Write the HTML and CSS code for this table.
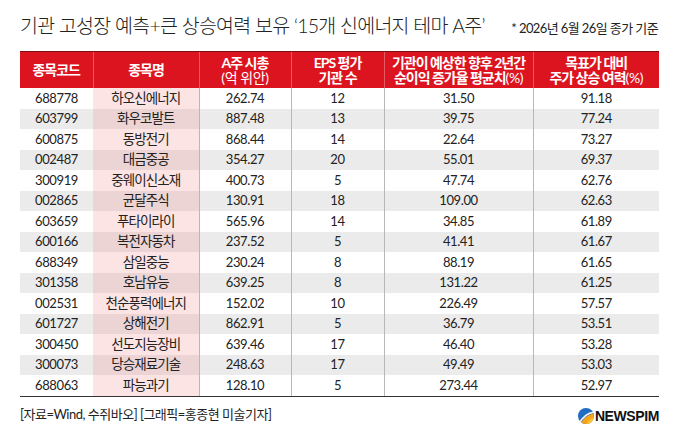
FILE: index.html
```html
<!DOCTYPE html>
<html lang="ko">
<head>
<meta charset="utf-8">
<link rel="stylesheet" href="styles.css">
</head>
<body>
<div class="page">
  <div class="top">
    <h1 class="title">기관 고성장 예측+큰 상승여력 보유 ‘15개 신에너지 테마 A주’</h1>
    <div class="note">* 2026년 6월 26일 종가 기준</div>
  </div>
  <table class="tbl">
    <colgroup>
      <col class="c1"><col class="c2"><col class="c3"><col class="c4"><col class="c5"><col class="c6">
    </colgroup>
    <thead>
      <tr>
        <th>종목코드</th>
        <th>종목명</th>
        <th>A주 시총<br><span class="lt">(억 위안)</span></th>
        <th>EPS 평가<br>기관 수</th>
        <th>기관이 예상한 향후 2년간<br>순이익 증가율 평균치<span class="lt">(%)</span></th>
        <th>목표가 대비<br>주가 상승 여력<span class="lt">(%)</span></th>
      </tr>
    </thead>
    <tbody>
      <tr><td>688778</td><td class="nm">하오신에너지</td><td>262.74</td><td>12</td><td>31.50</td><td>91.18</td></tr>
      <tr><td>603799</td><td class="nm">화우코발트</td><td>887.48</td><td>13</td><td>39.75</td><td>77.24</td></tr>
      <tr><td>600875</td><td class="nm">동방전기</td><td>868.44</td><td>14</td><td>22.64</td><td>73.27</td></tr>
      <tr><td>002487</td><td class="nm">대금중공</td><td>354.27</td><td>20</td><td>55.01</td><td>69.37</td></tr>
      <tr><td>300919</td><td class="nm">중웨이신소재</td><td>400.73</td><td>5</td><td>47.74</td><td>62.76</td></tr>
      <tr><td>002865</td><td class="nm">균달주식</td><td>130.91</td><td>18</td><td>109.00</td><td>62.63</td></tr>
      <tr><td>603659</td><td class="nm">푸타이라이</td><td>565.96</td><td>14</td><td>34.85</td><td>61.89</td></tr>
      <tr><td>600166</td><td class="nm">복전자동차</td><td>237.52</td><td>5</td><td>41.41</td><td>61.67</td></tr>
      <tr><td>688349</td><td class="nm">삼일중능</td><td>230.24</td><td>8</td><td>88.19</td><td>61.65</td></tr>
      <tr><td>301358</td><td class="nm">호남유능</td><td>639.25</td><td>8</td><td>131.22</td><td>61.25</td></tr>
      <tr><td>002531</td><td class="nm">천순풍력에너지</td><td>152.02</td><td>10</td><td>226.49</td><td>57.57</td></tr>
      <tr><td>601727</td><td class="nm">상해전기</td><td>862.91</td><td>5</td><td>36.79</td><td>53.51</td></tr>
      <tr><td>300450</td><td class="nm">선도지능장비</td><td>639.46</td><td>17</td><td>46.40</td><td>53.28</td></tr>
      <tr><td>300073</td><td class="nm">당승재료기술</td><td>248.63</td><td>17</td><td>49.49</td><td>53.03</td></tr>
      <tr><td>688063</td><td class="nm">파능과기</td><td>128.10</td><td>5</td><td>273.44</td><td>52.97</td></tr>
    </tbody>
  </table>
  <div class="foot">
    <div class="src">[자료=Wind, 수쥐바오] [그래픽=홍종현 미술기자]</div>
    <div class="logo">
      <svg class="logo-mark" width="16" height="16" viewBox="0 0 16 16">
        <defs><clipPath id="lc"><circle cx="8" cy="8" r="8"/></clipPath></defs>
        <g clip-path="url(#lc)">
          <rect width="16" height="16" fill="#1f6cc2"/>
          <path d="M2 17 Q6 7 17 5 L17 17 Z" fill="#f7a21b"/>
          <path d="M8 17 Q10 11 17 9 L17 17 Z" fill="#fbc531"/>
          <path d="M1.5 15.5 Q5.5 6 16 4" fill="none" stroke="#fff" stroke-width="1.6"/>
        </g>
      </svg>
      <span class="logo-txt">NEWSPIM</span>
    </div>
  </div>
</div>
</body>
</html>
```
FILE: styles.css
```css
html, body {
  margin: 0;
  padding: 0;
  background: #fff;
}
body {
  width: 680px;
  height: 442px;
  overflow: hidden;
  font-family: "Lato", "Noto Sans CJK KR", sans-serif;
  color: #222;
}
.page {
  padding: 12px 21px 0 20px;
}
.top {
  display: flex;
  justify-content: space-between;
  align-items: baseline;
  height: 39px;
}
.title {
  margin: 0;
  font-size: 19.5px;
  font-weight: 300;
  letter-spacing: -0.75px;
  color: #222;
  line-height: 28px;
  white-space: nowrap;
}
.note {
  font-size: 13px;
  letter-spacing: -0.6px;
  color: #222;
  white-space: nowrap;
  padding-right: 1px;
}
.tbl {
  width: 639px;
  border-collapse: collapse;
  table-layout: fixed;
}
.c1 { width: 73px; }
.c2 { width: 106px; }
.c3 { width: 92px; }
.c4 { width: 93px; }
.c5 { width: 149px; }
.c6 { width: 126px; }
.tbl th {
  background: #dc1420;
  color: #fff;
  font-weight: 700;
  font-size: 14px;
  letter-spacing: -1px;
  line-height: 15.5px;
  height: 36px;
  padding: 0;
  border-top: 1px solid #7a1016;
  border-left: 1px solid rgba(255, 255, 255, 0.3);
  text-align: center;
  vertical-align: middle;
}
.tbl th:first-child {
  border-left: none;
}
.tbl th .lt {
  font-weight: 400;
  letter-spacing: -0.4px;
}
.tbl td {
  height: 20.5px;
  padding: 0;
  text-align: center;
  vertical-align: middle;
  font-size: 13px;
  letter-spacing: -0.4px;
  line-height: 15px;
  color: #222;
  border-left: 1px solid #b8b8b8;
}
.tbl td:first-child,
.tbl td.nm {
  border-left: none;
}
.tbl td.nm {
  background: #fde4e4;
  font-size: 13.5px;
  letter-spacing: -0.9px;
}
.tbl tbody tr:nth-child(even) td {
  background: #ebebeb;
}
.tbl tbody tr:nth-child(even) td.nm {
  background: #ecd4d4;
}
.tbl tbody tr:last-child td {
  border-bottom: 1px solid #333;
}
.foot {
  display: flex;
  justify-content: space-between;
  align-items: center;
  margin-top: 7px;
}
.src {
  font-size: 13px;
  letter-spacing: -0.5px;
  color: #222;
}
.logo {
  display: flex;
  align-items: center;
  gap: 1px;
  margin-top: 4px;
}
.logo-mark {
  display: block;
}
.logo-txt {
  font-family: "Liberation Sans", sans-serif;
  font-weight: 700;
  font-size: 14px;
  letter-spacing: -0.4px;
  color: #111;
}
```
